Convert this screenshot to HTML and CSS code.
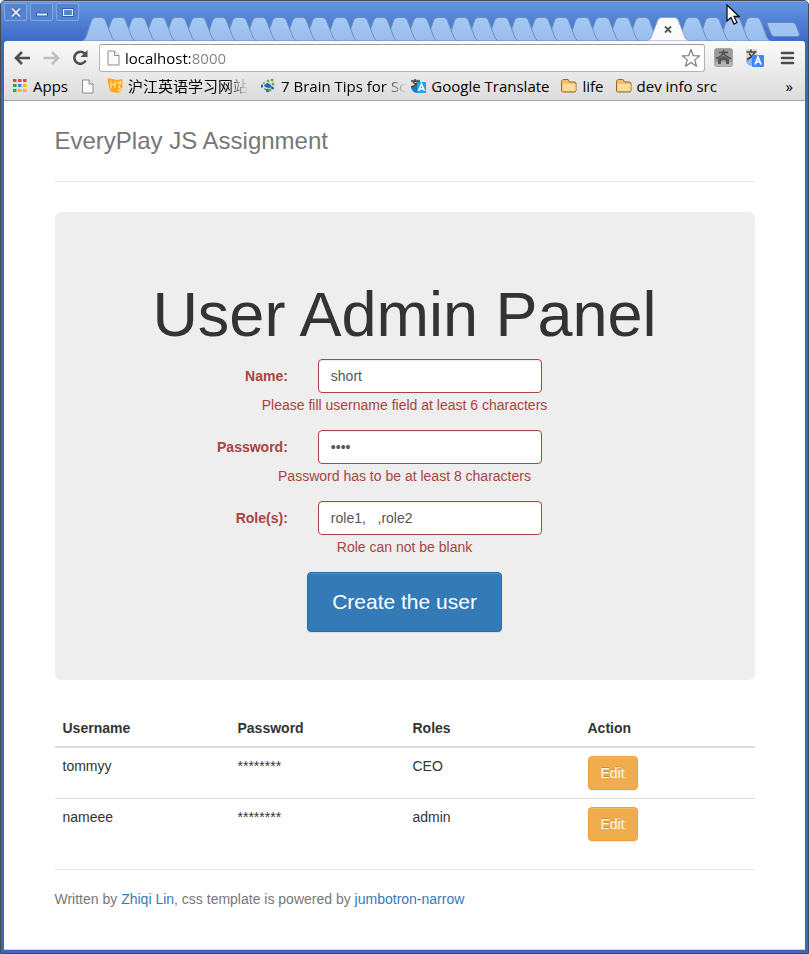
FILE: index.html
```html
<!DOCTYPE html>
<html lang="en">
<head>
<meta charset="utf-8">
<title>EveryPlay JS Assignment</title>
<link rel="stylesheet" href="styles.css">
</head>
<body>
<div class="window">
  <div class="titlebar">
    <div class="window-buttons">
      <button type="button" aria-label="Close window"><svg width="22" height="17" viewBox="0 0 22 17"><path d="M7 4.500l8 8M15 4.500l-8 8" stroke="#2a56a8" stroke-width="3.400"/><path d="M7 4.500l8 8M15 4.500l-8 8" stroke="#e4ecfa" stroke-width="1.800"/></svg></button>
      <button type="button" aria-label="Minimize window"><svg width="22" height="17" viewBox="0 0 22 17"><path d="M5 8.500h12v4H5z" fill="#2f5cae"/><path d="M6 9.500h10v2H6z" fill="#e4ecfa"/></svg></button>
      <button type="button" aria-label="Maximize window"><svg width="22" height="17" viewBox="0 0 22 17"><path d="M6.500 5.500h9v6h-9z" fill="none" stroke="#2f5cae" stroke-width="3"/><path d="M6.500 5.500h9v6h-9z" fill="#5580cc" stroke="#e4ecfa" stroke-width="1.200"/></svg></button>
    </div>
    <div class="tabs">
      <svg class="strip" width="720" height="24" viewBox="0 0 720 24">
        <defs>
          <linearGradient id="tabfill" x1="0" y1="0" x2="0" y2="1"><stop offset="0" stop-color="#a5c8f5"/><stop offset="1" stop-color="#98bdec"/></linearGradient>
          <path id="tab" d="M0 24C3 23 4 20 5 17L9 5C10 2 11 .5 14 .5H19C22 .5 23 2 24 5L29 18C30 21 31 23 34 24Z" fill="url(#tabfill)" stroke="#6d8fc0" stroke-width="1"/>
        </defs>
        <use href="#tab" x="655"/><use href="#tab" x="635"/><use href="#tab" x="614"/><use href="#tab" x="594"/>
        <use href="#tab" x="544"/><use href="#tab" x="524"/><use href="#tab" x="504"/><use href="#tab" x="484"/><use href="#tab" x="463"/><use href="#tab" x="443"/><use href="#tab" x="423"/><use href="#tab" x="403"/><use href="#tab" x="383"/><use href="#tab" x="363"/><use href="#tab" x="342"/><use href="#tab" x="322"/><use href="#tab" x="302"/><use href="#tab" x="282"/><use href="#tab" x="262"/><use href="#tab" x="242"/><use href="#tab" x="221"/><use href="#tab" x="201"/><use href="#tab" x="181"/><use href="#tab" x="161"/><use href="#tab" x="141"/><use href="#tab" x="121"/><use href="#tab" x="100"/><use href="#tab" x="80"/><use href="#tab" x="60"/><use href="#tab" x="40"/><use href="#tab" x="20"/><use href="#tab" x="0"/>
        <path d="M564 24C568 23 569 21 570 18L575 5C576 2 577 .5 580 .5H592C595 .5 596 2 597 5L602 18C603 21 604 23 608 24Z" fill="#fafafa" stroke="#8ba3c9"/>
        <path d="M687 5.500H709C712 5.500 713 6 714 8L717 16C718 18 717 19.500 715 19.500H694C691 19.500 690 19 689 17L685.500 8C685 6 685 5.500 687 5.500Z" fill="#a0c3f1" stroke="#6488bf"/>
        <path d="M583 9.500l6 6M589 9.500l-6 6" stroke="#555" stroke-width="1.800"/>
      </svg>
    </div>
  </div>

  <div class="toolbar">
    <div class="nav-row">
      <button type="button" class="tool" aria-label="Back"><svg width="20" height="20" viewBox="0 0 20 20"><path d="M18 10H4M10 4l-6 6 6 6" fill="none" stroke="#505050" stroke-width="2.600"/></svg></button>
      <button type="button" class="tool" aria-label="Forward"><svg width="20" height="20" viewBox="0 0 20 20"><path d="M2.500 10H16M11 4l6 6-6 6" fill="none" stroke="#c0c0c0" stroke-width="2.600"/></svg></button>
      <button type="button" class="tool" aria-label="Reload"><svg width="20" height="20" viewBox="0 0 20 20"><path d="M14.500 5.500A6 6 0 1 0 15.700 12.500" fill="none" stroke="#505050" stroke-width="2.600"/><path d="M17.500 2v7h-7z" fill="#505050"/></svg></button>
      <div class="omnibox">
        <svg width="13" height="16" viewBox="0 0 13 16"><path d="M1 1h6.500L12 5.500V15H1z" fill="#fafafa" stroke="#8e8e8e"/><path d="M7.500 1v4.500H12" fill="#eee" stroke="#8e8e8e"/></svg>
        <input class="address" type="text" aria-label="Address" value="localhost:8000">
        <svg width="20" height="20" viewBox="0 0 20 20"><path d="M10 1.500l2.300 6.200 6.400.2-5 4 1.800 6.300L10 14.600 4.500 18.200l1.800-6.300-5-4 6.400-.2z" fill="#fff" stroke="#7c7c7c" stroke-width="1.200" stroke-linejoin="round"/></svg>
      </div>
      <button type="button" class="tool ext" aria-label="Shrine extension"><svg width="20" height="20" viewBox="0 0 20 20"><rect x="1.500" y=".5" width="18" height="18" rx="2" fill="#9a9a9a" stroke="#a8a8a8"/><path d="M2 14h17v4H2z" fill="#b4b4b4"/><path d="M10.500 2v3M6 4.500h9M10.500 5C9 8 6 9.500 3 10.500M10.500 5c1.500 3 4.500 4.500 7.500 5.500" fill="none" stroke="#505050" stroke-width="1.600"/><path d="M5 16v-5l5.500-3 5.500 3v5h-3v-3l-2.500-1.500L8 13v3z" fill="#555"/></svg></button>
      <button type="button" class="tool ext" aria-label="Translate"><svg width="20" height="20" viewBox="0 0 20 20"><path d="M1 1h11v13H1z" fill="#dedaca"/><path d="M1 12c0 4 3 6 7 6V9H3z" fill="#8bb5f5"/><path d="M1.500 4h10M6 1.500V4M9.500 4C9 7 6 9.500 2 11.500M4 5.500C6 8.500 8 10 11 11" fill="none" stroke="#454545" stroke-width="1.600"/><rect x="7" y="7" width="12" height="12" rx="1" fill="#4286f5"/><path d="M10 16.500l3-7.500 3 7.500M11 14h4" fill="none" stroke="#fff" stroke-width="1.700"/></svg></button>
      <button type="button" class="tool ext" aria-label="Menu"><svg width="20" height="20" viewBox="0 0 20 20"><path d="M5 5h11M5 10h11M5 15h11" stroke="#4c4c4c" stroke-width="2.600" stroke-linecap="round"/></svg></button>
    </div>
    <div class="bookmarks">
      <a href="#"><svg width="16" height="14" viewBox="0 0 16 14"><path d="M1 0h3.500v3H1zM6 0h3.500v3H6zM11 0h3.500v3H11z" fill="#ea4335"/><path d="M1 5h3.500v3H1zM1 10h3.500v3H1z" fill="#34a058"/><path d="M6 5h3.500v3H6z" fill="#2a8cf0"/><path d="M11 5h3.500v3H11zM6 10h3.500v3H6zM11 10h3.500v3H11z" fill="#fbb50b"/></svg>Apps</a>
      <a href="#" class="page-mark" aria-label="Untitled"><svg width="12" height="15" viewBox="0 0 12 15"><path d="M.5 1H7l4 4v9H.5z" fill="#fafafa" stroke="#8e8e8e"/><path d="M7 1v4h4" fill="#eee" stroke="#8e8e8e"/></svg></a>
      <a href="#"><svg width="16" height="16" viewBox="0 0 16 16"><path d="M1 0l9 2 5-1q1 1 0 11l-4 3-6-1q-3-1-3-6Q0 3 1 0z" fill="#ffa51d"/><path d="M4 3v8M4 7l4-1M8 3v7M10 5l4-1-2 5 2 2-3 2" fill="none" stroke="#ffe38a" stroke-width="1.300"/></svg><span class="fade cjk">沪江英语学习网站</span></a>
      <a href="#"><svg width="16" height="16" viewBox="0 0 16 16"><path d="M4 7l3-2 3 1 2 3-3 1-4-1z" fill="#2466b8"/><path d="M1 8h2M7 11l1 3M12 11l1-2" stroke="#2466b8" stroke-width="3"/><g fill="#76a83b"><circle cx="8" cy="3" r="1.500"/><circle cx="12" cy="2" r="1.500"/><circle cx="4" cy="5" r="1"/><circle cx="10" cy="12" r="1.500"/><circle cx="5" cy="11" r="1"/><circle cx="13" cy="6" r="1.500"/></g></svg><span class="fade tips">7 Brain Tips for Sc</span></a>
      <a href="#"><svg width="16" height="16" viewBox="0 0 16 16"><path d="M1 1h9v11H1z" fill="#e0dbc8"/><path d="M1 9c1 5 4 6 8 6V8H2z" fill="#1777c5"/><path d="M1 3h9M5 1v3M8 3C7 6 5 8 1 9M3 4l6 5" fill="none" stroke="#454545" stroke-width="1.500"/><path d="M7 4h9v11H7z" fill="#26a0e8"/><path d="M8.500 13l3-7 3 7M9.500 11h4" fill="none" stroke="#fff" stroke-width="1.500"/></svg>Google Translate</a>
      <a href="#"><svg width="16" height="14" viewBox="0 0 16 14"><path d="M.5 12V2L2 .5h5L8.500 3H14l1 1v8l-1 1H1.500z" fill="#f4bf6a" stroke="#99662e"/><path d="M1.500 5h13v7h-13z" fill="#ffdb98"/></svg>life</a>
      <a href="#"><svg width="16" height="14" viewBox="0 0 16 14"><path d="M.5 12V2L2 .5h5L8.500 3H14l1 1v8l-1 1H1.500z" fill="#f4bf6a" stroke="#99662e"/><path d="M1.500 5h13v7h-13z" fill="#ffdb98"/></svg>dev info src</a>
      <button type="button" class="more" aria-label="More bookmarks">»</button>
    </div>
  </div>

  <div class="page">
    <div class="container">
      <header class="header"><h3>EveryPlay JS Assignment</h3></header>
      <main>
        <section class="jumbotron">
          <h1>User Admin Panel</h1>
          <form>
            <div class="group">
              <label for="name">Name:</label>
              <input id="name" type="text" value="short">
              <p class="help">Please fill username field at least 6 characters</p>
            </div>
            <div class="group">
              <label for="password">Password:</label>
              <input id="password" type="password" value="1234">
              <p class="help">Password has to be at least 8 characters</p>
            </div>
            <div class="group">
              <label for="roles">Role(s):</label>
              <input id="roles" type="text" value="role1,   ,role2">
              <p class="help">Role can not be blank</p>
            </div>
            <button type="button" class="create">Create the user</button>
          </form>
        </section>
        <table>
          <thead><tr><th>Username</th><th>Password</th><th>Roles</th><th>Action</th></tr></thead>
          <tbody>
            <tr><td>tommyy</td><td>********</td><td>CEO</td><td><button type="button" class="edit">Edit</button></td></tr>
            <tr><td>nameee</td><td>********</td><td>admin</td><td><button type="button" class="edit">Edit</button></td></tr>
          </tbody>
        </table>
      </main>
      <footer>Written by <a href="#">Zhiqi Lin</a>, css template is powered by <a href="#">jumbotron-narrow</a></footer>
    </div>
  </div>
  <svg class="cursor" width="14" height="22" viewBox="0 0 14 22"><path d="M1 1v16l4-3.500 3 6.500 3-1.500-3-6h5z" fill="#fff" stroke="#111" stroke-width="1.300"/></svg>
</div>
</body>
</html>
```
FILE: styles.css
```css
* { box-sizing: border-box; }
body {
  margin: 0;
  background: #fff;
  color: #333;
  font: 14px/20px "Liberation Sans", Arial, sans-serif;
}
svg { display: block; flex: none; }
button, input { font: inherit; }
a { color: #337ab7; text-decoration: none; }

/* Window frame */
.window {
  position: relative;
  display: flex;
  flex-direction: column;
  min-height: 100vh;
  padding: 0 3px 3px;
  background: #3b68bb;
  border: 1px solid #484a50;
  border-radius: 5px 5px 0 0;
}
.titlebar {
  display: flex;
  height: 40px;
  margin: 0 -3px;
  padding-left: 3px;
  background: linear-gradient(#6595e0, #3d6bc6);
  border-top: 1px solid #7ba6e8;
  border-radius: 4px 4px 0 0;
}
.window-buttons { display: flex; gap: 3px; padding-top: 1px; }
.window-buttons button {
  display: grid;
  place-items: center;
  width: 23px;
  height: 18px;
  padding: 0;
  background: #5683d0;
  border: 1px solid #82a5df;
  border-radius: 2px;
}
.tabs { display: flex; align-items: flex-end; margin-left: 3px; }

/* Toolbar */
.toolbar {
  display: flex;
  flex-direction: column;
  height: 60px;
  background: linear-gradient(#fafafa, #dcdcdc);
  border-bottom: 1px solid #a5a5a5;
  border-radius: 3px 3px 0 0;
}
.nav-row { display: flex; align-items: center; height: 34px; padding: 0 8px; }
.tool {
  padding: 0;
  margin-right: 9px;
  background: none;
  border: 0;
}
.ext { margin: 0 0 0 12px; }
.omnibox + .ext { margin-left: 8px; }
.omnibox {
  display: flex;
  flex: 1;
  align-items: center;
  height: 28px;
  padding: 0 3px 0 7px;
  background: #fff;
  border: 1px solid #b4b4b4;
  border-top-color: #9b9b9b;
  border-radius: 3px;
}
.omnibox, .bookmarks { font: 15px/20px "Open Sans", "Noto Sans", sans-serif; color: #000; }
.address {
  flex: 1;
  min-width: 0;
  padding: 0 5px;
  color: transparent;
  background: linear-gradient(90deg, #000 70px, #808080 70px);
  background-clip: text;
  -webkit-background-clip: text;
  border: 0;
  outline: 0;
}
.bookmarks {
  display: flex;
  align-items: center;
  gap: 12px;
  height: 22px;
  padding: 0 12px 0 8px;
  white-space: nowrap;
}
.bookmarks a { display: flex; align-items: center; gap: 5px; color: #000; }
.page-mark { margin: 0 1px 0 2px; }
.fade {
  -webkit-mask-image: linear-gradient(90deg, #000 82%, transparent);
  mask-image: linear-gradient(90deg, #000 82%, transparent);
}
.cjk { font-family: "Noto Sans CJK SC", sans-serif; }
.tips { margin-right: -8px; }
.more { margin-left: auto; padding: 0; background: none; border: 0; }

/* Page */
.page { flex: 1; background: #fff; border-bottom: 1px solid #d4d4d4; }
.container { max-width: 700px; margin: 0 auto; padding-top: 20px; }
.header { padding-bottom: 20px; margin-bottom: 30px; border-bottom: 1px solid #e5e5e5; }
.header h3 { margin: 0; color: #777; font-size: 24px; font-weight: 400; line-height: 40px; }
.jumbotron {
  padding: 48px 0;
  margin-bottom: 30px;
  background: #eee;
  border-radius: 6px;
  text-align: center;
}
h1 { margin: 20px 0 10px; font-size: 63px; font-weight: 400; line-height: 69px; }
.group {
  display: grid;
  grid-template-columns: 33.333% 32% 1fr;
  column-gap: 30px;
  margin-bottom: 15px;
  color: #a94442;
}
.group label { padding-top: 7px; font-weight: 700; text-align: right; }
.group input {
  width: 100%;
  height: 34px;
  padding: 6px 12px;
  color: #555;
  background: #fff;
  border: 1px solid #a94442;
  border-radius: 4px;
  box-shadow: inset 0 1px 1px rgba(0, 0, 0, .075);
}
.help { grid-column: 1 / -1; margin: 2px 0 0; }
.create {
  padding: 14px 24px;
  color: #fff;
  background: #337ab7;
  border: 1px solid #2e6da4;
  border-radius: 4px;
  box-shadow: inset 0 1px 0 rgba(255, 255, 255, .15), 0 1px 1px rgba(0, 0, 0, .075);
  font-size: 21px;
  line-height: 30px;
}
table { width: 100%; margin-bottom: 20px; border-collapse: collapse; table-layout: fixed; }
th, td { padding: 8px; text-align: left; vertical-align: top; }
th { border-bottom: 2px solid #ddd; }
tr + tr td { border-top: 1px solid #ddd; }
.edit {
  display: block;
  padding: 6px 12px;
  color: #fff;
  background: #f0ad4e;
  border: 1px solid #eea236;
  border-radius: 4px;
  box-shadow: inset 0 1px 0 rgba(255, 255, 255, .15), 0 1px 1px rgba(0, 0, 0, .075);
  text-shadow: 0 -1px 0 rgba(0, 0, 0, .2);
}
footer { padding-top: 19px; color: #777; border-top: 1px solid #e5e5e5; }

.cursor { position: absolute; top: 3px; left: 725px; }
```
